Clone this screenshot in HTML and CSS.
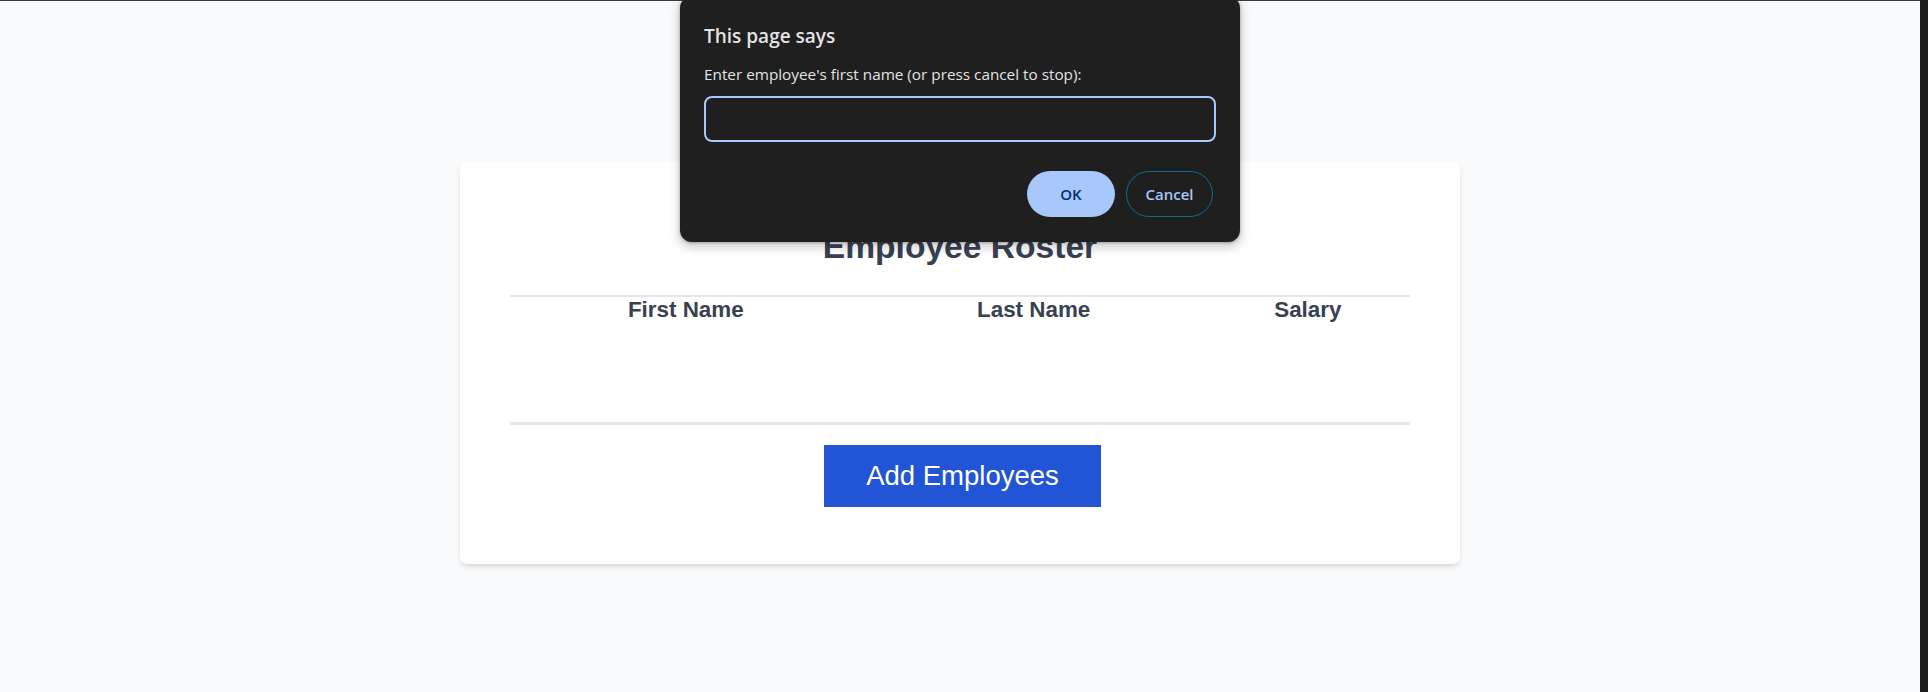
FILE: index.html
```html
<!DOCTYPE html>
<html lang="en">
<head>
<meta charset="utf-8">
<title>Employee Roster</title>
<link rel="stylesheet" href="styles.css">
</head>
<body>
  <div class="app">
    <main class="page">
      <section class="card">
        <h1 class="title">Employee Roster</h1>
        <table class="roster">
          <thead>
            <tr>
              <th>First Name</th>
              <th>Last Name</th>
              <th>Salary</th>
            </tr>
          </thead>
          <tbody>
            <tr class="empty-row"><td colspan="3"></td></tr>
          </tbody>
        </table>
        <div class="actions">
          <button class="add-btn" type="button">Add Employees</button>
        </div>
      </section>
    </main>
    <aside class="edge"></aside>
  </div>

  <div class="prompt" role="dialog">
    <div class="prompt-title">This page says</div>
    <div class="prompt-msg">Enter employee's first name (or press cancel to stop):</div>
    <div class="prompt-input"></div>
    <div class="prompt-buttons">
      <button class="btn-ok" type="button">OK</button>
      <button class="btn-cancel" type="button">Cancel</button>
    </div>
  </div>
</body>
</html>
```

FILE: styles.css
```css
html, body {
  margin: 0;
  padding: 0;
  height: 692px;
  overflow: hidden;
}

body {
  position: relative;
  font-family: "Liberation Sans", Arial, sans-serif;
}

.app {
  display: flex;
  height: 692px;
}

.page {
  flex: 1;
  background: #f9fafb;
  border-top: 1px solid #3b3b3b;
}

.edge {
  width: 8px;
  background: #1d1d1d;
}

.card {
  box-sizing: border-box;
  width: 1000px;
  margin: 161px auto 0;
  padding: 44px 50px 57px;
  background: #ffffff;
  border-radius: 7px;
  box-shadow: 0 4px 6px -1px rgba(0, 0, 0, 0.1), 0 2px 4px -2px rgba(0, 0, 0, 0.1);
}

.title {
  margin: 22px 0 29px;
  font-size: 33.6px;
  line-height: 38px;
  font-weight: 700;
  text-align: center;
  color: #374151;
}

.roster {
  width: 100%;
  border-collapse: separate;
  border-spacing: 0;
  border-top: 2px solid #e5e7eb;
  border-bottom: 3px solid #e5e7eb;
}

.roster th {
  padding: 0;
  font-size: 22.4px;
  line-height: 25px;
  font-weight: 700;
  color: #374151;
  text-align: center;
}

.empty-row td {
  height: 100px;
  padding: 0;
}

.actions {
  display: flex;
  justify-content: center;
  margin-top: 20px;
  padding-left: 5px;
}

.add-btn {
  height: 62px;
  padding: 0 42.5px;
  border: none;
  background: #2255d6;
  color: #ffffff;
  font-family: "Liberation Sans", Arial, sans-serif;
  font-size: 27.5px;
}

/* Browser prompt dialog */
.prompt {
  position: absolute;
  left: 680px;
  top: -4px;
  box-sizing: border-box;
  width: 560px;
  height: 246px;
  padding: 28px 24px 0;
  background: #1f1f1f;
  border-radius: 12px;
  box-shadow: 0 4px 8px 3px rgba(0, 0, 0, 0.15), 0 1px 3px rgba(0, 0, 0, 0.3);
  font-family: "Open Sans", "Noto Sans", sans-serif;
  color: #e3e3e3;
}

.prompt-title {
  font-size: 19px;
  line-height: 24px;
  font-weight: 600;
}

.prompt-msg {
  margin-top: 16px;
  font-size: 15.3px;
  line-height: 20px;
}

.prompt-input {
  box-sizing: border-box;
  margin-top: 12px;
  height: 46px;
  border: 2px solid #a8c7fa;
  border-radius: 8px;
}

.prompt-buttons {
  display: flex;
  justify-content: flex-end;
  gap: 11px;
  margin-top: 29px;
  padding-right: 3px;
}

.prompt-buttons button {
  box-sizing: border-box;
  height: 46px;
  border-radius: 23px;
  font-family: "Open Sans", "Noto Sans", sans-serif;
  font-size: 15px;
  font-weight: 600;
}

.btn-ok {
  width: 88px;
  border: none;
  background: #a8c7fa;
  color: #062e6f;
}

.btn-cancel {
  width: 87px;
  border: 1px solid #0f6b9e;
  background: transparent;
  color: #a8c7fa;
}
```
